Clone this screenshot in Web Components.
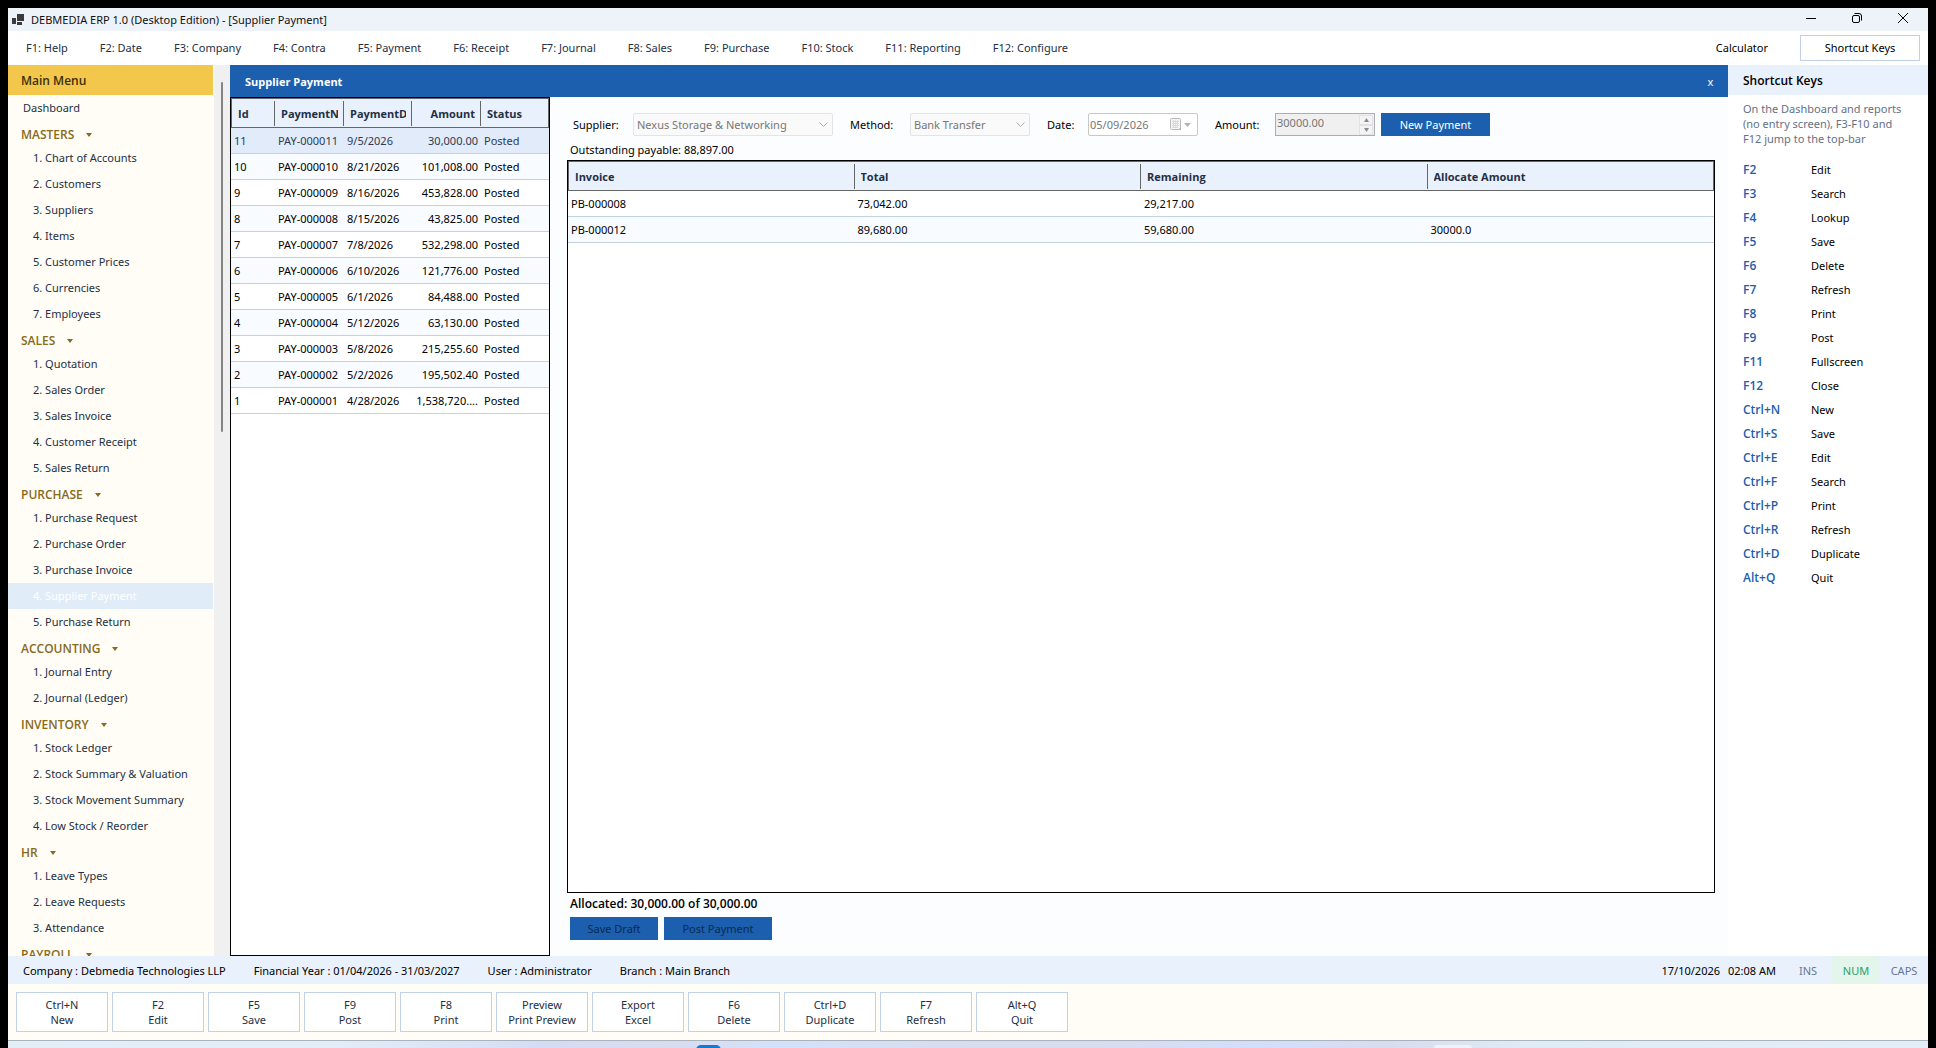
<!DOCTYPE html>
<html lang="en">
<head>
<meta charset="utf-8">
<title>DEBMEDIA ERP 1.0 (Desktop Edition)</title>
<style>
html, body { height: 100%; margin: 0; }
body {
  --blue: #1c5fae; --pale: #e9f1fc; --cream: #fffdf5; --line: #c1d1e6; --ink: #232f45;
  --strong: "Open Sans", "Noto Sans", sans-serif;
  background: #000; color: #000;
  font: 11px/15px "Noto Sans", "Open Sans", sans-serif;
}
</style>
</head>
<body>
<erp-app></erp-app>
<script>
const RESET = `
  *, *::before, *::after { box-sizing: border-box; }
  button, input, select { font: inherit; color: inherit; margin: 0; padding: 0; border: 0; border-radius: 0; background: none; }
  a { color: inherit; text-decoration: none; }
  svg { display: block; }
`;

class ErpElement extends HTMLElement {
  connectedCallback() {
    if (this.shadowRoot) return;
    this.attachShadow({ mode: "open" }).innerHTML =
      `<style>${RESET}${this.styles()}</style>${this.markup()}`;
  }
  styles() { return ""; }
  markup() { return ""; }
}

/* Window caption with the system buttons */
customElements.define("title-bar", class extends ErpElement {
  styles() { return `
    :host { display: flex; align-items: center; height: 23px; padding-left: 4px; gap: 7px; background: #eef3fa; }
    .title { flex: 1; color: #111; }
    button { width: 46px; height: 23px; display: grid; place-items: center; padding-bottom: 3px; }
    .buttons { display: flex; padding-right: 2px; }
  `; }
  markup() { return `
    <svg width="12" height="12" viewBox="0 0 12 12" fill="#3b3b3b" aria-hidden="true">
      <rect x="0" y="4" width="4" height="6"/><rect x="5" y="0" width="7" height="7"/><rect x="5" y="8" width="5" height="3"/>
    </svg>
    <span class="title"><slot></slot></span>
    <div class="buttons">
      <button type="button" aria-label="Minimize"><svg width="10" height="10" viewBox="0 0 10 10"><path d="M0 5.5h10" stroke="#000"/></svg></button>
      <button type="button" aria-label="Restore"><svg width="10" height="10" viewBox="0 0 10 10" fill="none" stroke="#000"><rect x=".5" y="2.5" width="7" height="7" rx="1.5"/><path d="M2.5 .5h4.5a2.5 2.5 0 0 1 2.500 2.500v4.500"/></svg></button>
      <button type="button" aria-label="Close"><svg width="10" height="10" viewBox="0 0 10 10"><path d="M0 0l10 10M10 0L0 10" stroke="#000"/></svg></button>
    </div>`; }
});

/* Function key menu */
customElements.define("menu-bar", class extends ErpElement {
  styles() { return `
    :host { display: flex; align-items: center; height: 34px; padding: 0 8px 0 18px; background: #fff; color: var(--ink); }
    nav { display: flex; flex: 1; gap: 32px; }
    button { height: 26px; padding-bottom: 2px; }
    .tools { display: flex; gap: 32px; color: #000; }
    .framed { width: 120px; border: 1px solid var(--line); }
  `; }
  markup() {
    const items = ["F1: Help", "F2: Date", "F3: Company", "F4: Contra", "F5: Payment", "F6: Receipt", "F7: Journal",
      "F8: Sales", "F9: Purchase", "F10: Stock", "F11: Reporting", "F12: Configure"];
    return `<nav>${items.map(t => `<button type="button">${t}</button>`).join("")}</nav>
      <div class="tools"><button type="button">Calculator</button><button type="button" class="framed">Shortcut Keys</button></div>`;
  }
});

/* One collapsible group of the main menu */
customElements.define("menu-group", class extends ErpElement {
  styles() { return `
    :host { display: block; }
    button { display: flex; align-items: center; gap: 12px; height: 24px; padding: 3px 0 0 13px; font-family: var(--strong); font-size: 12px; font-weight: 600; color: #876a1c; }
    a { display: block; height: 26px; line-height: 26px; padding-left: 25px; }
    a.active { background: #e1ecf9; color: #fff; }
  `; }
  markup() {
    const active = this.getAttribute("active");
    const items = this.hasAttribute("items") ? this.getAttribute("items").split("|") : [];
    return `<button type="button">${this.getAttribute("name")}
        <svg width="6" height="4" viewBox="0 0 6 4" fill="currentColor"><path d="M0 0h6L3 4z"/></svg></button>
      ${items.map((t, i) =>
        `<a href="#"${String(i + 1) === active ? ' class="active"' : ""}>${i + 1}. ${t.replace("&", "&amp;")}</a>`).join("")}`;
  }
});

customElements.define("side-menu", class extends ErpElement {
  styles() { return `
    :host { display: flex; width: 222px; min-height: 0; overflow: hidden; color: var(--ink); background: var(--cream); }
    nav { flex: 1; margin-right: 1px; overflow: hidden; }
    h2 { margin: 0; height: 30px; padding-left: 13px; font: 600 12px/31px var(--strong); color: #3b2f08; background: #f3c74c; }
    .home { display: block; height: 26px; line-height: 26px; padding-left: 15px; }
    .track { width: 16px; padding: 17px 7px 0; background: #f0f0f0; }
    .thumb { height: 350px; background: #858585; border-radius: 1px; }
  `; }
  markup() { return `
    <nav><h2>Main Menu</h2><a class="home" href="#">Dashboard</a>
      <menu-group name="MASTERS" items="Chart of Accounts|Customers|Suppliers|Items|Customer Prices|Currencies|Employees"></menu-group>
      <menu-group name="SALES" items="Quotation|Sales Order|Sales Invoice|Customer Receipt|Sales Return"></menu-group>
      <menu-group name="PURCHASE" active="4" items="Purchase Request|Purchase Order|Purchase Invoice|Supplier Payment|Purchase Return"></menu-group>
      <menu-group name="ACCOUNTING" items="Journal Entry|Journal (Ledger)"></menu-group>
      <menu-group name="INVENTORY" items="Stock Ledger|Stock Summary &amp; Valuation|Stock Movement Summary|Low Stock / Reorder"></menu-group>
      <menu-group name="HR" items="Leave Types|Leave Requests|Attendance"></menu-group>
      <menu-group name="PAYROLL"></menu-group>
    </nav>
    <div class="track"><div class="thumb"></div></div>`; }
});

/* Table of records: columns as "title:width:align", rows split by ";" and cells by "|" */
customElements.define("data-grid", class extends ErpElement {
  styles() { return `
    :host { display: block; border: 1px solid #000; background: #fff; overflow: hidden; }
    table { width: 100%; table-layout: fixed; border-spacing: 0; }
    th { height: 30px; padding: 0 6px; text-align: left; font: 700 11px/15px var(--strong); color: var(--ink);
      border: solid #666; border-width: 1px 0;
      background: linear-gradient(#666, #666) right center / 1px 25px no-repeat, var(--pale); }
    th:first-child { border-left-width: 1px; }
    th:last-child { border-right-width: 1px; background: var(--pale); }
    th.right { text-align: right; }
    th span { display: block; overflow: hidden; white-space: nowrap; }
    td { height: 26px; padding: 0 3px; border-bottom: 1px solid #c3d2e2; white-space: nowrap; overflow: hidden; }
    tr:nth-child(even) td { background: #f8fbff; }
    tr.selected td { background: #e1ebf9; color: #2f3b52; }
    td.right { text-align: right; }
  `; }
  markup() {
    const cols = this.getAttribute("columns").split(";").map(c => c.split(":"));
    const rows = this.getAttribute("rows").split(";").map(r => r.split("|"));
    const cls = i => cols[i][2] ? ` class="${cols[i][2]}"` : "";
    return `<table>
      <colgroup>${cols.map(c => `<col${c[1] ? ` style="width:${c[1]}px"` : ""}>`).join("")}</colgroup>
      <thead><tr>${cols.map((c, i) => `<th${cls(i)}><span>${c[0]}</span></th>`).join("")}</tr></thead>
      <tbody>${rows.map((r, n) => `<tr${this.getAttribute("selected") === String(n) ? ' class="selected"' : ""}>${
        r.map((v, i) => `<td${cls(i)}>${v}</td>`).join("")}</tr>`).join("")}</tbody></table>`;
  }
});

/* Entry form of a payment with its allocation grid */
customElements.define("payment-form", class extends ErpElement {
  styles() { return `
    :host { display: flex; flex-direction: column; padding: 16px 13px 16px 17px; min-width: 0; }
    .fields { display: flex; align-items: center; gap: 17px; padding-left: 6px; }
    .field { display: flex; align-items: center; }
    label { width: 60px; }
    label.short { width: 41px; }
    .combo, .date, .number { display: flex; align-items: center; height: 23px; }
    .combo { width: 200px; border: 1px solid #e4e4e4; border-radius: 2px; background: #fafafa; padding-right: 4px; }
    .combo.narrow { width: 120px; }
    select { flex: 1; min-width: 0; height: 21px; padding-left: 3px; appearance: none; color: #777; opacity: 1; }
    input { flex: 1; min-width: 0; height: 21px; padding-left: 1px; color: #777; appearance: textfield; }
    input::-webkit-inner-spin-button { display: none; }
    .date { width: 110px; border: 1px solid #c8c8c8; border-radius: 2px; background: #fff; padding-right: 6px; gap: 2px; }
    .number { width: 100px; border: 1px solid #abadb3; background: #f0f0f0; align-items: flex-start; padding-right: 1px; }
    .number input { height: 16px; }
    .spin { display: flex; flex-direction: column; padding-top: 1px; }
    .spin button { width: 14px; height: 10px; display: grid; place-items: center; border: 1px solid #e2e2e2; background: #f4f4f4; }
    .primary { height: 23px; background: var(--blue); color: #fff; width: 109px; }
    .primary:disabled { color: #0b2a50; }
    .new { margin-left: -11px; }
    .due { padding: 4px 0 0 3px; line-height: 20px; }
    data-grid { flex: 1; }
    .sum { padding-left: 3px; margin-bottom: 3px; font: 600 12px/21px var(--strong); }
    .actions { display: flex; gap: 6px; padding-left: 3px; }
    .actions .primary { width: 108px; }
    .actions .primary:first-child { width: 88px; }
  `; }
  markup() {
    const chevron = `<svg width="9" height="5" viewBox="0 0 9 5" fill="none" stroke="#aaa"><path d="M.5 .5l4 4 4-4"/></svg>`;
    return `
    <div class="fields">
      <div class="field"><label for="supplier">Supplier:</label>
        <span class="combo"><select id="supplier" disabled><option>Nexus Storage &amp; Networking</option></select>${chevron}</span></div>
      <div class="field"><label for="method">Method:</label>
        <span class="combo narrow"><select id="method" disabled><option>Bank Transfer</option></select>${chevron}</span></div>
      <div class="field"><label class="short" for="date">Date:</label>
        <span class="date"><input id="date" value="05/09/2026" disabled>
          <svg width="12" height="13" viewBox="0 0 12 13" fill="none"><rect x=".5" y=".5" width="10" height="11" rx="1" fill="#f6f6f8" stroke="#bcb8b8"/><path d="M2 3.500h7M2 5.500h7M2 7.500h7M2 9.500h5M3.500 2v8M5.500 2v8M7.500 2v8" stroke="#d5dae4"/><path d="M8 12l3-3v3z" fill="#b5b5b5"/></svg>
          <svg width="7" height="4" viewBox="0 0 7 4" fill="#b4b4b4"><path d="M0 0h7L3.500 4z"/></svg></span></div>
      <div class="field"><label for="amount">Amount:</label>
        <span class="number"><input id="amount" type="number" value="30000.00" disabled>
          <span class="spin">
            <button type="button" disabled aria-label="Increase"><svg width="5" height="4" viewBox="0 0 5 4" fill="#8a8a8a"><path d="M0 4h5L2.500 0z"/></svg></button>
            <button type="button" disabled aria-label="Decrease"><svg width="5" height="4" viewBox="0 0 5 4" fill="#8a8a8a"><path d="M0 0h5L2.500 4z"/></svg></button>
          </span></span></div>
      <button type="button" class="primary new">New Payment</button>
    </div>
    <div class="due">Outstanding payable: 88,897.00</div>
    <data-grid columns="Invoice;Total;Remaining;Allocate Amount"
      rows="PB-000008|73,042.00|29,217.00|;PB-000012|89,680.00|59,680.00|30000.0"></data-grid>
    <div class="sum">Allocated: 30,000.00 of 30,000.00</div>
    <div class="actions"><button type="button" class="primary" disabled>Save Draft</button><button type="button" class="primary" disabled>Post Payment</button></div>`;
  }
});

/* Document window: caption, list of payments and the form */
customElements.define("payment-screen", class extends ErpElement {
  styles() { return `
    :host { display: flex; flex-direction: column; flex: 1; min-width: 0; background: #fcfdff; }
    header { display: flex; align-items: center; height: 32px; padding: 1px 10px 0 15px; background: var(--blue); color: #fff; }
    h1 { flex: 1; margin: 0; font: 700 11px/15px var(--strong); }
    header button { width: 15px; height: 20px; }
    .body { display: flex; flex: 1; min-height: 0; }
    .list { width: 320px; }
    payment-form { flex: 1; }
  `; }
  markup() { return `
    <header><h1>Supplier Payment</h1><button type="button" aria-label="Close screen">x</button></header>
    <div class="body">
      <data-grid class="list" selected="0" columns="Id:44;PaymentNumber:69;PaymentDate:68;Amount:69:right;Status:68"
        rows="11|PAY-000011|9/5/2026|30,000.00|Posted;10|PAY-000010|8/21/2026|101,008.00|Posted;9|PAY-000009|8/16/2026|453,828.00|Posted;8|PAY-000008|8/15/2026|43,825.00|Posted;7|PAY-000007|7/8/2026|532,298.00|Posted;6|PAY-000006|6/10/2026|121,776.00|Posted;5|PAY-000005|6/1/2026|84,488.00|Posted;4|PAY-000004|5/12/2026|63,130.00|Posted;3|PAY-000003|5/8/2026|215,255.60|Posted;2|PAY-000002|5/2/2026|195,502.40|Posted;1|PAY-000001|4/28/2026|1,538,720....|Posted"></data-grid>
      <payment-form></payment-form>
    </div>`; }
});

customElements.define("shortcut-panel", class extends ErpElement {
  styles() { return `
    :host { display: block; width: 200px; background: #fff; overflow: hidden; }
    h2 { margin: 0; height: 30px; padding-left: 15px; font: 600 12px/31px var(--strong); background: var(--pale); }
    p { margin: 0; padding: 6px 15px 11px; color: #667085; }
    dl { margin: 0; padding-left: 15px; display: grid; grid-template-columns: 68px 1fr; grid-auto-rows: 24px; align-items: center; }
    dt { font-family: var(--strong); font-size: 12px; font-weight: 600; color: var(--blue); }
    dd { margin: 0; }
  `; }
  markup() {
    const keys = [["F2", "Edit"], ["F3", "Search"], ["F4", "Lookup"], ["F5", "Save"], ["F6", "Delete"], ["F7", "Refresh"],
      ["F8", "Print"], ["F9", "Post"], ["F11", "Fullscreen"], ["F12", "Close"], ["Ctrl+N", "New"], ["Ctrl+S", "Save"],
      ["Ctrl+E", "Edit"], ["Ctrl+F", "Search"], ["Ctrl+P", "Print"], ["Ctrl+R", "Refresh"], ["Ctrl+D", "Duplicate"], ["Alt+Q", "Quit"]];
    return `<h2>Shortcut Keys</h2><p>On the Dashboard and reports<br>(no entry screen), F3-F10 and<br>F12 jump to the top-bar</p>
      <dl>${keys.map(([k, v]) => `<dt>${k}</dt><dd>${v}</dd>`).join("")}</dl>`;
  }
});

customElements.define("status-bar", class extends ErpElement {
  styles() { return `
    :host { display: flex; align-items: stretch; justify-content: space-between; height: 28px; line-height: 29px; padding-left: 15px; background: var(--pale); }
    .info { display: flex; gap: 28px; }
    .state { display: flex; gap: 8px; }
    .locks { display: flex; }
    .locks span { width: 48px; text-align: center; color: #6a768f; }
    .locks .on { background: #e4f5ec; color: #26a269; }
  `; }
  markup() { return `
    <div class="info"><span>Company : Debmedia Technologies LLP</span><span>Financial Year : 01/04/2026 - 31/03/2027</span>
    <span>User : Administrator</span><span>Branch : Main Branch</span></div>
    <div class="state"><span>17/10/2026</span><span>02:08 AM</span>
    <div class="locks"><span>INS</span><span class="on">NUM</span><span>CAPS</span></div></div>`; }
});

customElements.define("action-bar", class extends ErpElement {
  styles() { return `
    :host { display: flex; gap: 4px; height: 56px; padding: 8px; background: var(--cream); }
    button { width: 92px; height: 40px; border: 1px solid var(--line); background: #fff; color: var(--ink); line-height: 15px; }
  `; }
  markup() {
    return [["Ctrl+N", "New"], ["F2", "Edit"], ["F5", "Save"], ["F9", "Post"], ["F8", "Print"], ["Preview", "Print Preview"],
      ["Export", "Excel"], ["F6", "Delete"], ["Ctrl+D", "Duplicate"], ["F7", "Refresh"], ["Alt+Q", "Quit"]]
      .map(([k, v]) => `<button type="button">${k}<br>${v}</button>`).join("");
  }
});

/* Upper edge of the desktop task bar */
customElements.define("task-strip", class extends ErpElement {
  styles() { return `
    :host { display: block; height: 8px; overflow: hidden; border-top: 1px solid #aab2bd;
      background: linear-gradient(90deg, #e4eef7 0, #e2edf8 17%, #d4dcf5 28%, #d8dcef 34%, #d2e2fa 40%, #d8dcef 50%, #d8dcef 57%, #d2dffb 65%, #d8dcef 72%, #dfebf5 79%, #e2edf7 100%); }
    svg { width: 100%; height: 7px; }
  `; }
  markup() { return `<svg viewBox="0 0 1920 7" preserveAspectRatio="xMinYMin slice" aria-hidden="true">
    <rect x="688" y="4" width="25" height="12" rx="5" fill="#0f7bd7"/><rect x="1426" y="4" width="38" height="12" rx="3" fill="#f0f2f9"/></svg>`; }
});

customElements.define("erp-app", class extends ErpElement {
  styles() { return `
    :host { display: flex; flex-direction: column; height: 100vh; padding: 8px 8px 0; box-sizing: border-box; background: #000; }
    main { display: flex; flex: 1; min-height: 0; }
  `; }
  markup() { return `
    <title-bar>DEBMEDIA ERP 1.0 (Desktop Edition) - [Supplier Payment]</title-bar>
    <menu-bar></menu-bar>
    <main><side-menu></side-menu><payment-screen></payment-screen><shortcut-panel></shortcut-panel></main>
    <status-bar></status-bar><action-bar></action-bar><task-strip></task-strip>`; }
});
</script>
</body>
</html>
